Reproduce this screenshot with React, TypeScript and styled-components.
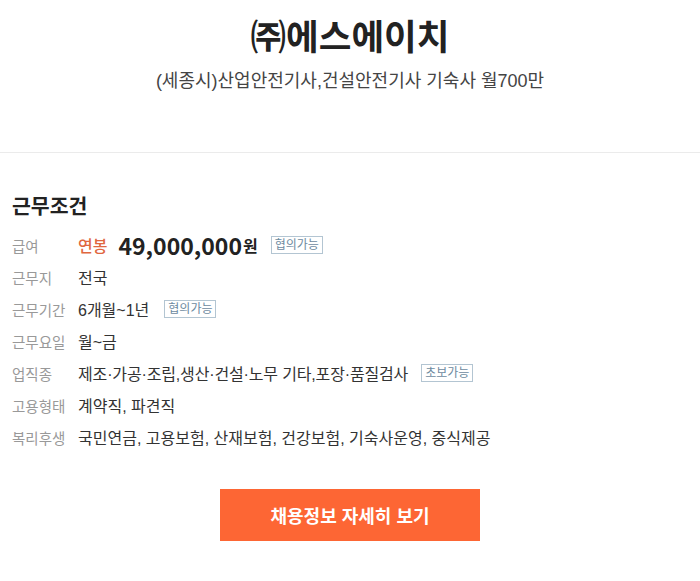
import React from "react";
import styled, { createGlobalStyle } from "styled-components";

const Global = createGlobalStyle`
  html, body { margin: 0; padding: 0; background: #fff; }
  body { font-family: "Liberation Sans", "Noto Sans CJK KR", sans-serif; color: #333; }
`;

const Page = styled.div`
  width: 700px;
`;

const Header = styled.header`
  padding: 12px 0 59px;
  text-align: center;
  border-bottom: 1px solid #ebebeb;
`;

const Title = styled.h1`
  margin: 0;
  font-family: "Noto Sans CJK KR", sans-serif;
  font-size: 35.5px;
  line-height: 46px;
  font-weight: 700;
  color: #222;
`;

const Subtitle = styled.p`
  margin: 11px 0 0;
  font-size: 18px;
  line-height: 24px;
  color: #444;
`;

const Section = styled.section`
  padding: 40px 12px 0;
`;

const Heading = styled.h2`
  margin: 0 0 8px;
  font-size: 20.5px;
  line-height: 28px;
  font-weight: 700;
  color: #222;
`;

const Row = styled.div`
  display: flex;
  align-items: center;
  height: 32px;
`;

const Label = styled.div`
  width: 66px;
  flex-shrink: 0;
  font-size: 14.5px;
  color: #999;
`;

const Value = styled.div<{ $tight?: boolean }>`
  display: flex;
  align-items: center;
  font-size: 16px;
  color: #333;
  white-space: nowrap;
  letter-spacing: ${(p) => (p.$tight ? "-0.15px" : "0")};
`;

const SalaryType = styled.span`
  color: #e0673f;
  font-weight: 500;
  font-size: 16px;
  margin-right: 11px;
`;

const Amount = styled.span`
  font-family: "Noto Sans CJK KR", sans-serif;
  font-size: 23px;
  font-weight: 700;
  color: #222;
`;

const Won = styled.span`
  font-size: 16px;
  font-weight: 700;
  color: #222;
  margin-left: 1px;
`;

const Badge = styled.span<{ $gap?: number }>`
  display: inline-flex;
  align-items: center;
  justify-content: center;
  box-sizing: border-box;
  height: 18px;
  padding: 0 3px;
  margin-left: ${(p) => p.$gap ?? 14}px;
  border: 1px solid #b3c5d2;
  color: #6d8aa0;
  font-size: 12px;
  line-height: 1;
  letter-spacing: 0;
`;

const ButtonWrap = styled.div`
  display: flex;
  justify-content: center;
  margin-top: 36px;
`;

const MoreButton = styled.button`
  width: 260px;
  height: 52px;
  border: 0;
  background: #fd6634;
  color: #fff;
  font-family: inherit;
  font-size: 18px;
  font-weight: 700;
  cursor: pointer;
`;

export default function App() {
  return (
    <Page>
      <Global />
      <Header>
        <Title>㈜에스에이치</Title>
        <Subtitle>(세종시)산업안전기사,건설안전기사 기숙사 월700만</Subtitle>
      </Header>
      <Section>
        <Heading>근무조건</Heading>
        <Row>
          <Label>급여</Label>
          <Value>
            <SalaryType>연봉</SalaryType>
            <Amount>49,000,000</Amount>
            <Won>원</Won>
            <Badge $gap={13}>협의가능</Badge>
          </Value>
        </Row>
        <Row>
          <Label>근무지</Label>
          <Value>전국</Value>
        </Row>
        <Row>
          <Label>근무기간</Label>
          <Value>
            6개월~1년
            <Badge $gap={15}>협의가능</Badge>
          </Value>
        </Row>
        <Row>
          <Label>근무요일</Label>
          <Value>월~금</Value>
        </Row>
        <Row>
          <Label>업직종</Label>
          <Value $tight>
            제조·가공·조립,생산·건설·노무 기타,포장·품질검사
            <Badge $gap={13}>초보가능</Badge>
          </Value>
        </Row>
        <Row>
          <Label>고용형태</Label>
          <Value>계약직, 파견직</Value>
        </Row>
        <Row>
          <Label>복리후생</Label>
          <Value>국민연금, 고용보험, 산재보험, 건강보험, 기숙사운영, 중식제공</Value>
        </Row>
        <ButtonWrap>
          <MoreButton>채용정보 자세히 보기</MoreButton>
        </ButtonWrap>
      </Section>
    </Page>
  );
}
